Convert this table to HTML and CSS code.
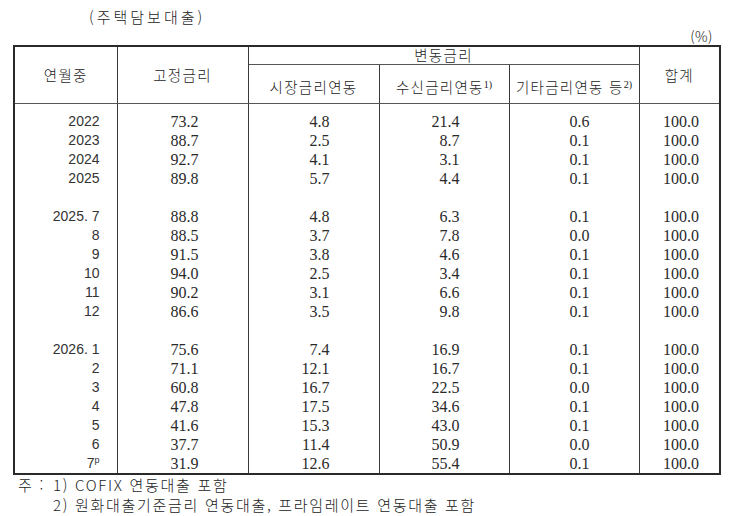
FILE: index.html
```html
<!DOCTYPE html>
<html lang="ko">
<head>
<meta charset="utf-8">
<link rel="stylesheet" href="styles.css">
</head>
<body>
<div class="page">
  <div class="title">(주택담보대출)</div>
  <div class="unit">(%)</div>
  <table class="tbl">
    <colgroup>
      <col class="c1"><col class="c2"><col class="c3"><col class="c4"><col class="c5"><col class="c6">
    </colgroup>
    <thead>
      <tr class="h1">
        <th rowspan="2" class="hd">연월중</th>
        <th rowspan="2" class="hd">고정금리</th>
        <th colspan="3" class="hd grp">변동금리</th>
        <th rowspan="2" class="hd">합계</th>
      </tr>
      <tr class="h2">
        <th class="hd sub">시장금리연동</th>
        <th class="hd sub">수신금리연동<sup>1)</sup></th>
        <th class="hd sub">기타금리연동 등<sup>2)</sup></th>
      </tr>
    </thead>
    <tbody>
      <tr class="first"><td class="d">2022</td><td>73.2</td><td>4.8</td><td>21.4</td><td>0.6</td><td class="t">100.0</td></tr>
      <tr><td class="d">2023</td><td>88.7</td><td>2.5</td><td>8.7</td><td>0.1</td><td class="t">100.0</td></tr>
      <tr><td class="d">2024</td><td>92.7</td><td>4.1</td><td>3.1</td><td>0.1</td><td class="t">100.0</td></tr>
      <tr><td class="d">2025</td><td>89.8</td><td>5.7</td><td>4.4</td><td>0.1</td><td class="t">100.0</td></tr>
      <tr class="gap"><td class="d"></td><td></td><td></td><td></td><td></td><td class="t"></td></tr>
      <tr><td class="d">2025. 7</td><td>88.8</td><td>4.8</td><td>6.3</td><td>0.1</td><td class="t">100.0</td></tr>
      <tr><td class="d">8</td><td>88.5</td><td>3.7</td><td>7.8</td><td>0.0</td><td class="t">100.0</td></tr>
      <tr><td class="d">9</td><td>91.5</td><td>3.8</td><td>4.6</td><td>0.1</td><td class="t">100.0</td></tr>
      <tr><td class="d">10</td><td>94.0</td><td>2.5</td><td>3.4</td><td>0.1</td><td class="t">100.0</td></tr>
      <tr><td class="d">11</td><td>90.2</td><td>3.1</td><td>6.6</td><td>0.1</td><td class="t">100.0</td></tr>
      <tr><td class="d">12</td><td>86.6</td><td>3.5</td><td>9.8</td><td>0.1</td><td class="t">100.0</td></tr>
      <tr class="gap"><td class="d"></td><td></td><td></td><td></td><td></td><td class="t"></td></tr>
      <tr><td class="d">2026. 1</td><td>75.6</td><td>7.4</td><td>16.9</td><td>0.1</td><td class="t">100.0</td></tr>
      <tr><td class="d">2</td><td>71.1</td><td>12.1</td><td>16.7</td><td>0.1</td><td class="t">100.0</td></tr>
      <tr><td class="d">3</td><td>60.8</td><td>16.7</td><td>22.5</td><td>0.0</td><td class="t">100.0</td></tr>
      <tr><td class="d">4</td><td>47.8</td><td>17.5</td><td>34.6</td><td>0.1</td><td class="t">100.0</td></tr>
      <tr><td class="d">5</td><td>41.6</td><td>15.3</td><td>43.0</td><td>0.1</td><td class="t">100.0</td></tr>
      <tr><td class="d">6</td><td>37.7</td><td>11.4</td><td>50.9</td><td>0.0</td><td class="t">100.0</td></tr>
      <tr><td class="d">7<sup class="p">p</sup></td><td>31.9</td><td>12.6</td><td>55.4</td><td>0.1</td><td class="t">100.0</td></tr>
    </tbody>
  </table>
  <div class="notes">
    <div class="note"><span class="mark">주 :</span><span>1) COFIX 연동대출 포함</span></div>
    <div class="note"><span class="mark"></span><span>2) 원화대출기준금리 연동대출, 프라임레이트 연동대출 포함</span></div>
  </div>
</div>
</body>
</html>
```

FILE: styles.css
```css
html, body {
  margin: 0;
  padding: 0;
  background: #ffffff;
}

.page {
  width: 706px;
  margin-left: 13px;
  color: #222;
  font-family: "Noto Sans CJK KR", "Liberation Sans", sans-serif;
  font-weight: 300;
}

.title {
  padding-top: 7px;
  padding-left: 76px;
  height: 20px;
  line-height: 20px;
  font-size: 15px;
  letter-spacing: 3px;
}

.unit {
  text-align: right;
  padding-right: 6px;
  height: 18px;
  line-height: 18px;
  font-size: 14px;
  letter-spacing: 0.5px;
}

.tbl {
  border-collapse: collapse;
  table-layout: fixed;
  width: 706px;
  border: 2px solid #2a2a2a;
}

.c1 { width: 103px; }
.c2 { width: 131px; }
.c3 { width: 131px; }
.c4 { width: 130px; }
.c5 { width: 130px; }
.c6 { width: 81px; }

.hd {
  font-weight: 300;
  font-size: 14.5px;
  letter-spacing: 1.3px;
  color: #222;
  border-left: 1px solid #3a3a3a;
  border-right: 1px solid #3a3a3a;
  padding: 0;
  text-align: center;
  vertical-align: middle;
  white-space: nowrap;
}

.h1 { height: 18px; }
.h2 { height: 39px; }

.grp {
  border-bottom: 1px solid #3a3a3a;
  line-height: 16px;
}

.sub {
  padding-top: 6px;
}

.h1 .hd, .h2 .hd {
  border-bottom: 1px solid #555;
}

.hd sup {
  font-family: "Liberation Serif", serif;
  font-size: 10px;
  letter-spacing: 0;
  vertical-align: 5px;
  line-height: 0;
}

tbody td {
  font-family: "Liberation Serif", serif;
  font-weight: normal;
  font-size: 16px;
  line-height: 19px;
  height: 19px;
  padding: 0 49px 0 0;
  text-align: right;
  border-left: 1px solid #3a3a3a;
  border-right: 1px solid #3a3a3a;
  color: #2a2a2a;
  white-space: nowrap;
}

tbody tr.first td {
  padding-top: 8px;
}

tbody td.d {
  font-family: "Liberation Sans", sans-serif;
  font-size: 14px;
  padding-right: 17px;
  color: #333;
}

tbody td.t {
  padding-right: 20px;
}

.p {
  font-size: 9px;
  vertical-align: 5px;
  line-height: 0;
}

.notes {
  font-size: 15px;
  letter-spacing: 1.7px;
  color: #222;
}

.note {
  display: flex;
  height: 20px;
  line-height: 20px;
}

.mark {
  display: inline-block;
  width: 40px;
  padding-left: 5px;
  box-sizing: border-box;
  white-space: pre;
}
```
